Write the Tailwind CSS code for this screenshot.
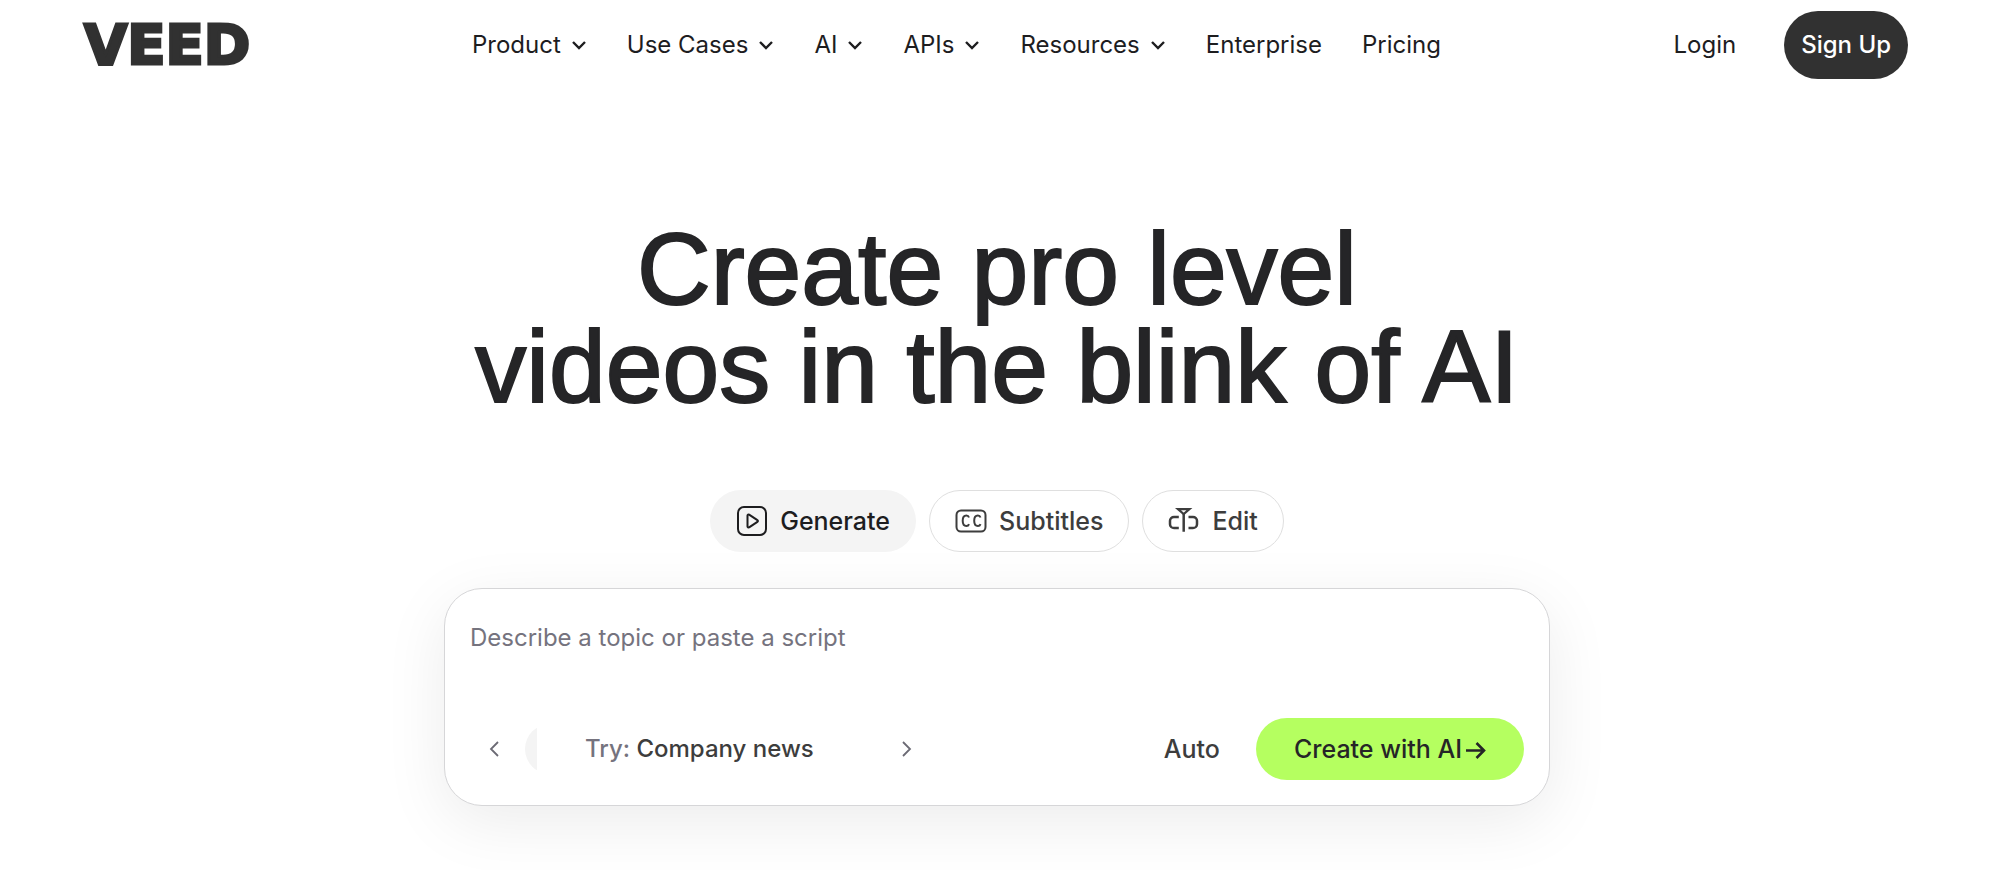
<!DOCTYPE html>
<html lang="en">
<head>
    <meta charset="UTF-8">
    <meta name="viewport" content="width=device-width, initial-scale=1.0">
    <title>VEED - Create pro level videos in the blink of AI</title>
    <script src="https://cdn.jsdelivr.net/npm/@tailwindcss/browser@4"></script>
</head>
<body class="bg-white min-h-screen font-['Inter',sans-serif] text-2xl leading-9 text-[#1d1d1f]">

    <header class="flex items-center h-[90px] pl-[84px] pr-[92px]">
        <a href="#" class="w-[180px] font-['DejaVu_Sans',sans-serif] text-[56px] leading-none font-bold text-[#313131] [-webkit-text-stroke:3px_#313131]">VEED</a>

        <nav class="flex items-center gap-10 ml-52">
            <button class="flex items-center gap-2">Product
                <svg class="w-[18px] h-5" viewBox="0 0 18 20" fill="none" stroke="currentColor" stroke-width="2.4"><path d="M4 7l6 6 6-6"/></svg>
            </button>
            <button class="flex items-center gap-2">Use Cases
                <svg class="w-[18px] h-5" viewBox="0 0 18 20" fill="none" stroke="currentColor" stroke-width="2.4"><path d="M4 7l6 6 6-6"/></svg>
            </button>
            <button class="flex items-center gap-2">AI
                <svg class="w-[18px] h-5" viewBox="0 0 18 20" fill="none" stroke="currentColor" stroke-width="2.4"><path d="M4 7l6 6 6-6"/></svg>
            </button>
            <button class="flex items-center gap-2">APIs
                <svg class="w-[18px] h-5" viewBox="0 0 18 20" fill="none" stroke="currentColor" stroke-width="2.4"><path d="M4 7l6 6 6-6"/></svg>
            </button>
            <button class="flex items-center gap-2">Resources
                <svg class="w-[18px] h-5" viewBox="0 0 18 20" fill="none" stroke="currentColor" stroke-width="2.4"><path d="M4 7l6 6 6-6"/></svg>
            </button>
            <a href="#">Enterprise</a>
            <a href="#">Pricing</a>
        </nav>

        <div class="flex items-center gap-12 ml-auto">
            <a href="#">Login</a>
            <a href="#" class="flex items-center justify-center h-[68px] px-[17px] rounded-full bg-[#313131] text-white font-medium">Sign Up</a>
        </div>
    </header>

    <main class="flex flex-col items-center pt-[130px] pr-1.5">
        <h1 class="text-center font-['Liberation_Sans',sans-serif] text-[102px] leading-[98px] text-[#252527] [-webkit-text-stroke:2px_#252527]">Create pro level<br>videos in the blink of AI</h1>

        <div class="flex gap-[13px] mt-[74px] text-[25px] font-medium text-[#3d3d3d]">
            <button class="flex items-center gap-3 h-[62px] px-[26px] rounded-full bg-[#f4f4f4] text-[#1d1d1f]">
                <svg class="size-8" viewBox="0 0 32 32" fill="none" stroke="currentColor" stroke-width="2" stroke-linejoin="round"><rect x="2" y="2" width="28" height="28" rx="6"/><path d="M11.5 10.6c0-.9.9-1.3 1.6-.9l8.3 5.4c.7.4.7 1.3 0 1.7l-8.3 5.5c-.7.5-1.6 0-1.6-.8z"/></svg>
                Generate
            </button>
            <button class="flex items-center gap-3 h-[62px] px-[25px] rounded-full border border-[#dfdfdf] bg-white">
                <svg class="size-8" viewBox="0 0 32 32" fill="none" stroke="currentColor" stroke-width="2"><rect x="1.5" y="5.5" width="29" height="21" rx="4.5"/><path d="M14 12.5c-.4-1.200-1.300-1.900-2.600-1.900-2.200 0-3.700 1.700-3.700 5.200s1.500 5.200 3.700 5.200c1.300 0 2.200-.7 2.600-1.900M25.500 12.500c-.4-1.200-1.300-1.900-2.600-1.900-2.200 0-3.700 1.700-3.700 5.200s1.500 5.200 3.700 5.200c1.300 0 2.200-.7 2.600-1.900"/></svg>
                Subtitles
            </button>
            <button class="flex items-center gap-3 h-[62px] px-[25px] rounded-full border border-[#dfdfdf] bg-white">
                <svg class="size-8" viewBox="0 0 32 32" fill="none" stroke="currentColor" stroke-width="2.5"><path d="M10.8 12H6c-2.200 0-4 1.700-4 3.800v3.400C2 21.300 3.800 23 6 23h4.800M20.500 12H25c2.200 0 4 1.700 4 3.800v3.400c0 2.100-1.800 3.800-4 3.800h-4.500M15.700 8v18.700"/><path d="M10 4.200h11.400L15.700 9z" stroke-width="2.200"/></svg>
                Edit
            </button>
        </div>

        <form class="w-full max-w-[1106px] mt-9 mb-16 px-[25px] pt-[31px] pb-[25px] rounded-[38px] border border-[#d6d6d8] bg-white shadow-[0_16px_64px_rgba(0,0,0,0.08)]">
            <label for="prompt" class="sr-only">Topic or script</label>
            <textarea id="prompt" placeholder="Describe a topic or paste a script" class="block w-full h-[72px] mb-[26px] leading-9 resize-none outline-none placeholder:text-[#75737e]"></textarea>
            <div class="flex items-center font-medium text-[#3d3d3d]">
                <button type="button" aria-label="Previous idea" class="ml-[15px]">
                    <svg class="block size-5" viewBox="0 0 20 20" fill="none" stroke="#6b6a74" stroke-width="1.8"><path d="M13 3l-7 7 7 7"/></svg>
                </button>
                <!-- left edge of the idea pill that is sliding away -->
                <div class="w-3 h-[50px] ml-5 overflow-hidden">
                    <div class="w-24 h-[50px] rounded-full bg-[#f4f4f4]"></div>
                </div>
                <button type="button" class="ml-12"><span class="text-[#75737e]">Try:</span> Company news</button>
                <button type="button" aria-label="Next idea" class="ml-[82px]">
                    <svg class="block size-5" viewBox="0 0 20 20" fill="none" stroke="#6b6a74" stroke-width="1.8"><path d="M7 3l7 7-7 7"/></svg>
                </button>
                <button type="button" class="ml-auto text-[25px]">Auto</button>
                <button type="submit" class="flex items-center justify-center gap-1 h-[62px] px-[38px] ml-9 rounded-full bg-[#b5ff60] text-[25px] text-[#252527]">Create with AI
                    <svg class="size-5" viewBox="0 0 20 20" fill="none" stroke="currentColor" stroke-width="2.6"><path d="M0 11.500h18M10.500 4l7.500 7.500L10.500 19"/></svg>
                </button>
            </div>
        </form>
    </main>

</body>
</html>
